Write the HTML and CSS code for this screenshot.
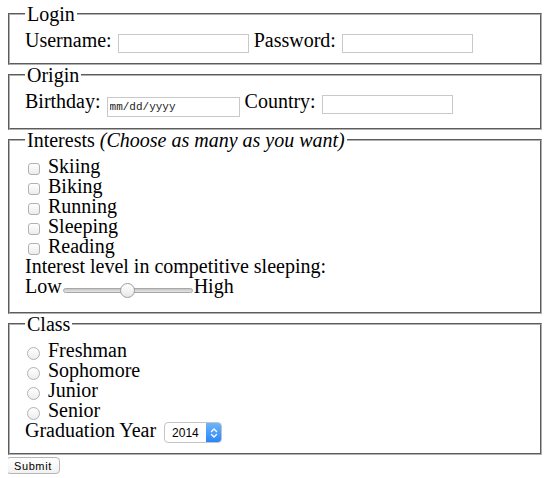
FILE: index.html
```html
<!DOCTYPE html>
<html lang="en">
<head>
    <meta charset="UTF-8">
    <title>Survey</title>
    <link rel="stylesheet" href="styles.css">
</head>
<body>

    <form class="survey">

        <fieldset class="group">
            <legend>Login</legend>
            <label>Username: <input type="text" class="field"></label>
            <label>Password: <input type="password" class="field"></label>
        </fieldset>

        <fieldset class="group group-origin">
            <legend>Origin</legend>
            <label>Birthday: <input type="text" class="field field-date" placeholder="mm/dd/yyyy"></label>
            <label>Country: <input type="text" class="field"></label>
        </fieldset>

        <fieldset class="group">
            <legend>Interests <em>(Choose as many as you want)</em></legend>
            <label><input type="checkbox" class="check"> Skiing</label><br>
            <label><input type="checkbox" class="check"> Biking</label><br>
            <label><input type="checkbox" class="check"> Running</label><br>
            <label><input type="checkbox" class="check"> Sleeping</label><br>
            <label><input type="checkbox" class="check"> Reading</label><br>
            Interest level in competitive sleeping:<br>
            Low<input type="range" class="slider" min="0" max="100" value="50">High
        </fieldset>

        <fieldset class="group">
            <legend>Class</legend>
            <label><input type="radio" name="class" class="radio"> Freshman</label><br>
            <label><input type="radio" name="class" class="radio"> Sophomore</label><br>
            <label><input type="radio" name="class" class="radio"> Junior</label><br>
            <label><input type="radio" name="class" class="radio"> Senior</label><br>
            Graduation Year
            <span class="select-wrap"><select class="select">
                    <option>2014</option>
                    <option>2015</option>
                    <option>2016</option>
                    <option>2017</option>
                </select><span class="select-arrow">
                    <svg width="8" height="12" viewBox="0 0 8 12">
                        <path d="M1.5 4.5 L4 2 L6.5 4.5 M1.5 7.5 L4 10 L6.5 7.5" fill="none" stroke="#fff" stroke-width="1.4" stroke-linecap="round" stroke-linejoin="round"/>
                    </svg>
                </span></span>
        </fieldset>

        <button type="submit" class="submit">Submit</button>
    </form>

</body>
</html>
```

FILE: styles.css
```css
/* Pagina geral */
body {
    margin: 4px 8px 0;
    font-family: "Liberation Serif", "Times New Roman", serif;
    font-size: 20px;
    line-height: 20px;
    color: #000;
    background: #fff;
}

/* Blocos do formulario */
.group {
    margin: 0;
    padding: 6px 15px 10px;
    border: 2px groove #b0b0b0;
}
.group-origin { padding-bottom: 11px; }
.group legend {
    padding: 0 2px;
    line-height: 20px;
}

/* Campos de texto */
.field {
    box-sizing: border-box;
    width: 131px;
    height: 19px;
    margin: 0 0 0 1px;
    padding: 1px 3px;
    border: 1px solid #c9c9c9;
    font: 13px "Liberation Sans", Arial, sans-serif;
    vertical-align: -1px;
}
.field-date {
    width: 133px;
    height: 20px;
    padding: 1px 2px;
    font: 11px "Liberation Mono", "Courier New", monospace;
    vertical-align: -2px;
}
.field-date::placeholder { color: #222; }

/* Checkbox e radio estilo mac */
.check, .radio {
    appearance: none;
    -webkit-appearance: none;
    display: inline-block;
    box-sizing: border-box;
    margin: 0 3px 0 3px;
    border: 1px solid #b2b2b2;
    background: linear-gradient(#ffffff, #ececec);
}
.check {
    width: 12px;
    height: 12px;
    border-radius: 3px;
    vertical-align: -2px;
}
.radio {
    width: 13px;
    height: 13px;
    margin-left: 2px;
    border-radius: 50%;
    vertical-align: -3px;
}

/* Slider */
.slider {
    -webkit-appearance: none;
    appearance: none;
    width: 130px;
    height: 24px;
    margin: 0 1px;
    background: transparent;
    vertical-align: -9px;
}
.slider::-webkit-slider-runnable-track {
    height: 5px;
    border: 1px solid #a7a7a7;
    border-radius: 3px;
    background: linear-gradient(#c4c4c4, #e6e6e6);
    box-sizing: border-box;
}
.slider::-webkit-slider-thumb {
    -webkit-appearance: none;
    width: 15px;
    height: 15px;
    margin-top: -6px;
    border: 1px solid #9d9d9d;
    border-radius: 50%;
    background: linear-gradient(#ffffff, #e8e8e8);
    box-sizing: border-box;
}

/* Select do ano */
.select-wrap {
    display: inline-block;
    box-sizing: border-box;
    height: 21px;
    margin-left: 3px;
    border: 1px solid #c4c4c4;
    border-radius: 4px;
    background: #fff;
    overflow: hidden;
    font-size: 0;
    line-height: 0;
    vertical-align: -6px;
}
.select {
    -webkit-appearance: none;
    appearance: none;
    box-sizing: border-box;
    width: 41px;
    height: 19px;
    padding: 0 0 0 7px;
    border: none;
    background: transparent;
    font: 12px "Liberation Sans", Arial, sans-serif;
    color: #000;
    vertical-align: top;
}
.select-arrow {
    display: inline-flex;
    align-items: center;
    justify-content: center;
    width: 15px;
    height: 19px;
    background: linear-gradient(#6db5fb, #2a86f7);
    vertical-align: top;
}

/* Botao enviar */
.submit {
    display: block;
    margin: 2px 0 0 -2px;
    height: 17px;
    padding: 0 7px;
    border: 1px solid #b6b6b6;
    border-radius: 4px;
    background: linear-gradient(#ffffff, #f1f1f1);
    font: 11px "Liberation Sans", Arial, sans-serif;
    letter-spacing: 0.6px;
    color: #000;
}
```
